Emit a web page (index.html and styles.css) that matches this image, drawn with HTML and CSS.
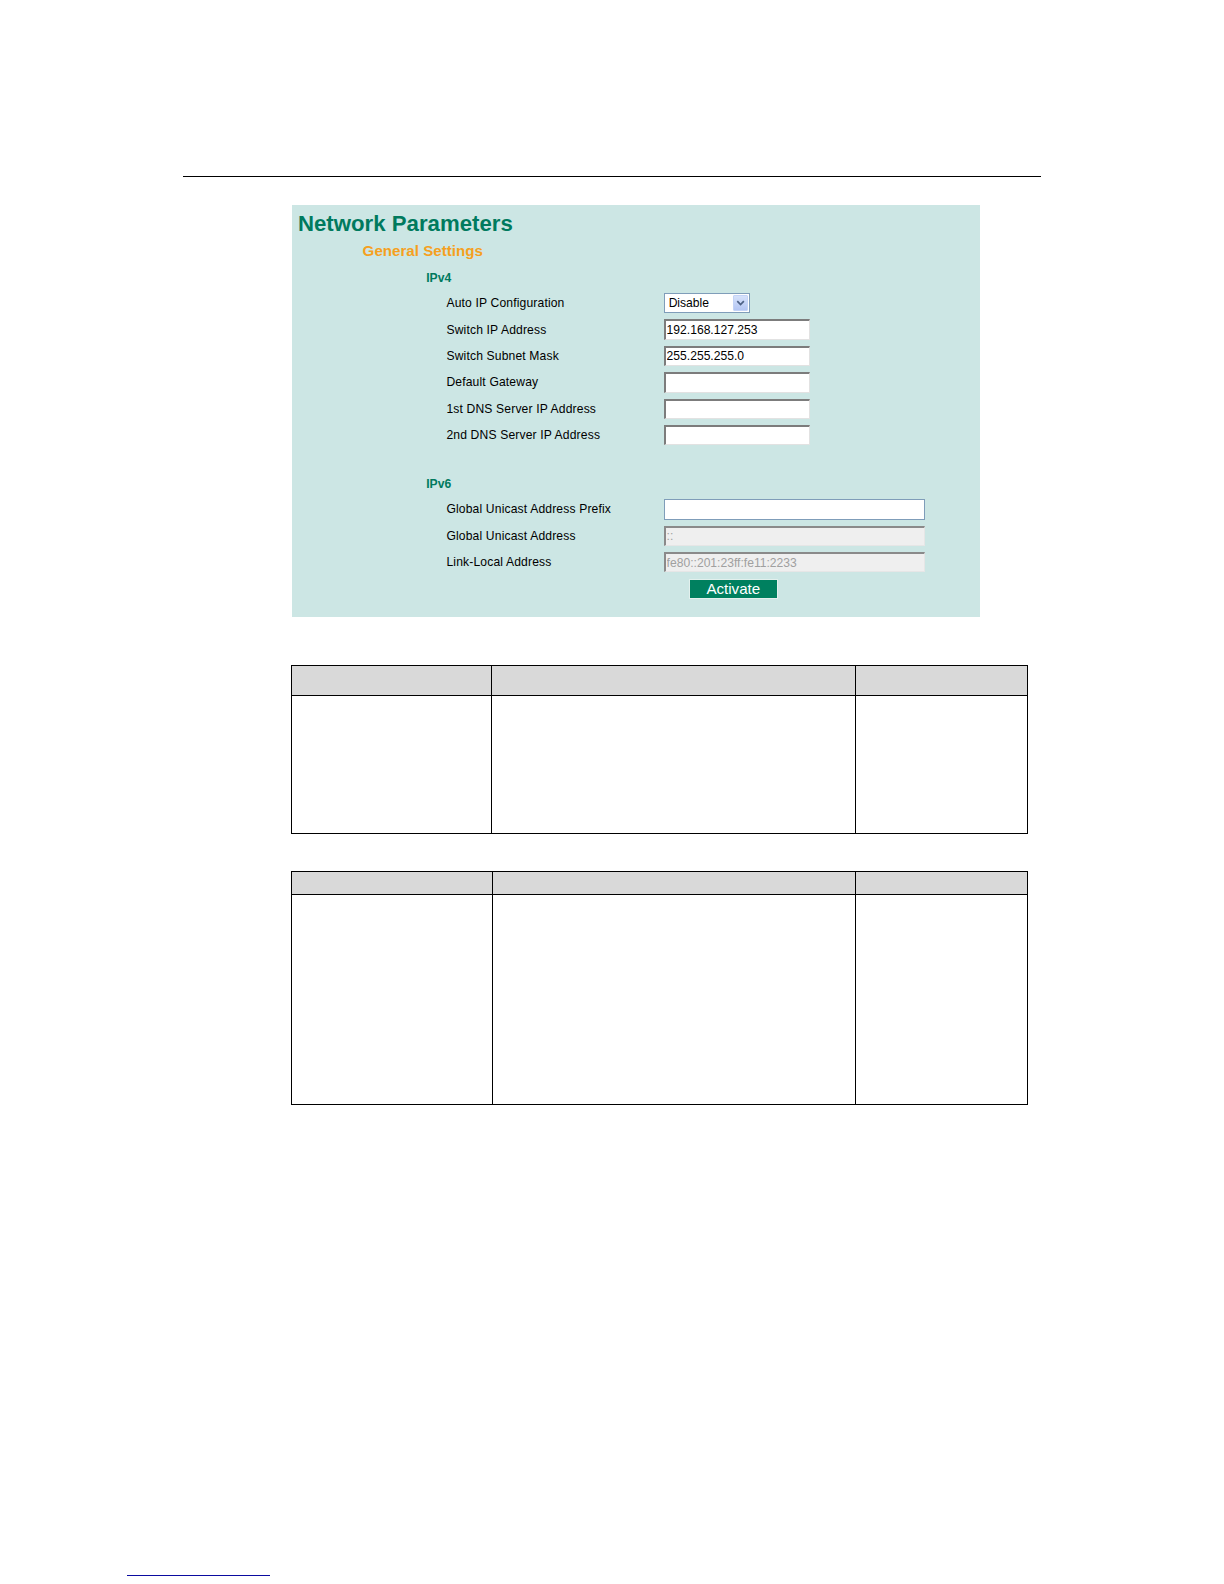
FILE: index.html
```html
<!DOCTYPE html>
<html>
<head>
<meta charset="utf-8">
<link rel="stylesheet" href="styles.css">
</head>
<body>
<div class="page">
  <div class="top-rule"></div>

  <div class="panel">
    <div class="title">Network Parameters</div>
    <div class="subtitle">General Settings</div>
    <div class="section">IPv4</div>
    <div class="rows">
      <div class="row">
        <span class="label">Auto IP Configuration</span>
        <div class="select">
          <span class="select-text">Disable</span>
          <span class="select-arrow">
            <svg width="14" height="14" viewBox="0 0 14 14"><path d="M3.5 5 L7 8.5 L10.5 5" fill="none" stroke="#4d6185" stroke-width="1.8"/></svg>
          </span>
        </div>
      </div>
      <div class="row">
        <span class="label">Switch IP Address</span>
        <input class="field" type="text" value="192.168.127.253">
      </div>
      <div class="row">
        <span class="label">Switch Subnet Mask</span>
        <input class="field" type="text" value="255.255.255.0">
      </div>
      <div class="row">
        <span class="label">Default Gateway</span>
        <input class="field" type="text" value="">
      </div>
      <div class="row">
        <span class="label">1st DNS Server IP Address</span>
        <input class="field" type="text" value="">
      </div>
      <div class="row">
        <span class="label">2nd DNS Server IP Address</span>
        <input class="field" type="text" value="">
      </div>
    </div>

    <div class="section section-v6">IPv6</div>
    <div class="rows">
      <div class="row">
        <span class="label">Global Unicast Address Prefix</span>
        <input class="field wide active" type="text" value="">
      </div>
      <div class="row">
        <span class="label">Global Unicast Address</span>
        <input class="field wide disabled" type="text" value="::" disabled>
      </div>
      <div class="row">
        <span class="label">Link-Local Address</span>
        <input class="field wide disabled" type="text" value="fe80::201:23ff:fe11:2233" disabled>
      </div>
    </div>
    <div class="button-row">
      <button class="activate" type="button">Activate</button>
    </div>
  </div>

  <table class="grid grid-one">
    <tr class="head"><td class="c1"></td><td class="c2"></td><td class="c3"></td></tr>
    <tr class="body"><td></td><td></td><td></td></tr>
  </table>

  <table class="grid grid-two">
    <tr class="head"><td class="c1"></td><td class="c2"></td><td class="c3"></td></tr>
    <tr class="body"><td></td><td></td><td></td></tr>
  </table>

  <div class="foot-line"></div>
</div>
</body>
</html>
```

FILE: styles.css
```css
html, body {
  margin: 0;
  padding: 0;
  background: #ffffff;
}

.page {
  zoom: 1.0101;
  font-family: "Liberation Sans", Arial, sans-serif;
  padding-top: 174px;
  padding-bottom: 10px;
}

.top-rule {
  margin-left: 181px;
  width: 850px;
  border-top: 1px solid #000;
}

.panel {
  margin-top: 28px;
  margin-left: 289px;
  width: 681px;
  height: 408px;
  box-sizing: border-box;
  background: #cce6e4;
  padding-top: 6px;
}

.title {
  padding-left: 6px;
  font-size: 22px;
  font-weight: bold;
  line-height: 25px;
  color: #007a5e;
}

.subtitle {
  margin-top: 6px;
  padding-left: 70px;
  font-size: 15px;
  font-weight: bold;
  line-height: 18px;
  color: #f5a01e;
}

.section {
  margin-top: 10px;
  padding-left: 133px;
  font-size: 12px;
  font-weight: bold;
  line-height: 15px;
  color: #007a5e;
}

.section-v6 {
  margin-top: 28px;
}

.rows {
  margin-top: 4px;
  display: flex;
  flex-direction: column;
}

.row {
  height: 26.2px;
  display: flex;
  align-items: center;
  padding-left: 153px;
}

.label {
  width: 215px;
  font-size: 12px;
  letter-spacing: 0.15px;
  color: #000;
}

.field {
  box-sizing: border-box;
  width: 145px;
  height: 20px;
  margin: 0;
  padding: 0 0 0 1px;
  font-family: "Liberation Sans", Arial, sans-serif;
  font-size: 12px;
  color: #000;
  background: #ffffff;
  border-top: 2px solid #7c7c7c;
  border-left: 2px solid #7c7c7c;
  border-bottom: 1px solid #e2e2e2;
  border-right: 1px solid #e2e2e2;
  outline: none;
}

.field.wide {
  width: 259px;
}

.field.active {
  border: 1px solid #7f9db9;
  height: 21px;
}

.field.disabled {
  background: #efefef;
  color: #a0a0a0;
  border-top: 2px solid #8a8a8a;
  border-left: 2px solid #8a8a8a;
  border-bottom: 1px solid #e6e6e6;
  border-right: 1px solid #e6e6e6;
}

.select {
  box-sizing: border-box;
  width: 86px;
  height: 20px;
  display: flex;
  align-items: center;
  justify-content: space-between;
  background: #ffffff;
  border: 1px solid #7f9db9;
  padding: 0 1px 0 4px;
}

.select-text {
  font-size: 12px;
  color: #000;
}

.select-arrow {
  width: 15px;
  height: 16px;
  display: flex;
  align-items: center;
  justify-content: center;
  background: linear-gradient(#d6e2fb, #b4c6f4);
  border: 1px solid #c3d3f7;
  box-sizing: border-box;
  border-radius: 1px;
}

.button-row {
  margin-top: 4px;
  padding-left: 393px;
}

.activate {
  display: block;
  width: 88px;
  height: 19px;
  margin: 0;
  padding: 0;
  background: #00805f;
  color: #ffffff;
  border: 1px solid #e3f0ed;
  font-family: "Liberation Sans", Arial, sans-serif;
  font-size: 15px;
  line-height: 16px;
}

.grid {
  border-collapse: collapse;
  margin-left: 288px;
  width: 730px;
  table-layout: fixed;
}

.grid td {
  border: 1px solid #000;
  padding: 0;
}

.grid .head td {
  background: #d9d9d9;
}

.grid .c1 { width: 197px; }
.grid .c2 { width: 359px; }
.grid .c3 { width: 170px; }

.grid-one {
  margin-top: 47px;
}

.grid-one .head td { height: 29px; }
.grid-one .body td { height: 136px; }

.grid-two {
  margin-top: 36px;
}

.grid-two .head td { height: 22px; }
.grid-two .body td { height: 207px; }

.grid-two .c1 { width: 198px; }
.grid-two .c2 { width: 358px; }

.foot-line {
  margin-top: 465px;
  margin-left: 126px;
  width: 141px;
  height: 1px;
  background: #0b0ba0;
}
```
